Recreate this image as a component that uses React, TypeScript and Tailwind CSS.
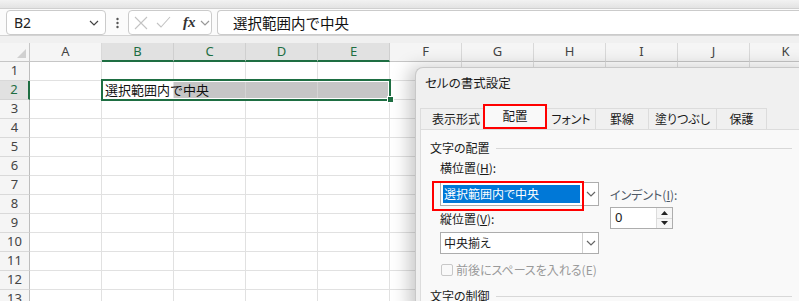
import React from "react";

const cols = ["A", "B", "C", "D", "E", "F", "G", "H", "I", "J", "K"];
const rows = Array.from({ length: 13 }, (_, i) => i + 1);
const selCols = ["B", "C", "D", "E"];

function Chevron({ className, color = "#555" }: { className?: string; color?: string }) {
  return (
    <svg className={className} width="10" height="6" viewBox="0 0 10 6">
      <polyline points="1,1 5,5 9,1" fill="none" stroke={color} strokeWidth="1.2" />
    </svg>
  );
}

function headerClass(c: string) {
  if (selCols.includes(c)) {
    return "w-[72px] shrink-0 flex items-center justify-center bg-[#e1e1e1] text-[#1e6e42] border-r border-r-[#cfcfcf] border-b-2 border-b-[#1e6e42]";
  }
  return "w-[72px] shrink-0 flex items-center justify-center bg-[#f5f5f5] text-[#444] border-r border-r-[#d9d9d9] border-b border-b-[#c6c6c6]";
}

function cellClass(r: number, c: string) {
  if (r === 2 && (c === "C" || c === "D" || c === "E")) {
    return "w-[72px] shrink-0 bg-[#c6c6c6] border-r border-b border-[#d4d4d4]";
  }
  return "w-[72px] shrink-0 border-r border-b border-[#e1e1e1]";
}

export default function App() {
  return (
    <div className="relative w-[799px] h-[301px] overflow-hidden bg-white font-['Noto_Sans_CJK_JP',sans-serif]">
      {/* top band */}
      <div className="h-[9px] bg-gradient-to-b from-[#f2f2f2] to-[#e3e3e3] border-b border-[#d0d0d0]" />
      {/* formula bar */}
      <div className="h-[26px] flex items-end bg-[#fbfbfb]">
        <div className="ml-[6px] w-[100px] h-[25px] bg-white border border-[#cbcbcb] rounded-[4px] flex items-center pl-[7px] pr-[6px]">
          <span className="font-['Noto_Sans',sans-serif] text-[14px] text-[#222]">B2</span>
          <Chevron className="ml-auto" color="#444" />
        </div>
        <div className="w-[22px] h-[25px] flex items-center justify-center">
          <svg width="3" height="12" viewBox="0 0 3 12">
            <circle cx="1.5" cy="2" r="1.2" fill="#555" />
            <circle cx="1.5" cy="6" r="1.2" fill="#555" />
            <circle cx="1.5" cy="10" r="1.2" fill="#555" />
          </svg>
        </div>
        <div className="w-[84px] h-[25px] bg-white border border-[#cbcbcb] rounded-[4px] flex items-center pl-[5px]">
          <svg width="14" height="14" viewBox="0 0 14 14" className="ml-[0px]">
            <path d="M1 1 L13 13 M13 1 L1 13" stroke="#c3c3c3" strokeWidth="1.1" fill="none" />
          </svg>
          <svg width="15" height="13" viewBox="0 0 15 13" className="ml-[8px]">
            <path d="M1 7 L5 11 L14 1" stroke="#c3c3c3" strokeWidth="1.1" fill="none" />
          </svg>
          <span className="ml-[12px] font-['Liberation_Serif',serif] italic font-bold text-[15px] text-[#333] leading-none">
            fx
          </span>
          <Chevron className="ml-[4px]" color="#999" />
        </div>
        <div className="ml-[5px] flex-1 h-[25px] bg-white border border-r-0 border-[#cbcbcb] rounded-l-[4px] flex items-center pl-[15px]">
          <span className="text-[14.5px] text-[#111]">選択範囲内で中央</span>
        </div>
      </div>
      {/* gray band */}
      <div className="h-[8px] bg-[#f0f0f0] border-t border-[#d3d3d3]" />

      {/* sheet */}
      <div className="relative font-['Noto_Sans',sans-serif] text-[13px]">
        <div className="flex h-[19px]">
          <div className="relative w-[30px] shrink-0 bg-[#f5f5f5] border-r border-b border-[#c6c6c6]">
            <svg className="absolute right-[3px] bottom-[3px]" width="9" height="9" viewBox="0 0 9 9">
              <polygon points="9,0 9,9 0,9" fill="#d0d0d0" />
            </svg>
          </div>
          {cols.map((c) => (
            <div key={c} className={headerClass(c)}>
              {c}
            </div>
          ))}
        </div>
        {rows.map((r) => (
          <div key={r} className="flex h-[19px]">
            <div
              className={
                r === 2
                  ? "w-[30px] shrink-0 flex items-center justify-center bg-[#e1e1e1] text-[#1e6e42] border-r-2 border-r-[#1e6e42] border-b border-b-[#d4d4d4]"
                  : "w-[30px] shrink-0 flex items-center justify-center bg-[#f5f5f5] text-[#444] border-r border-r-[#bdbdbd] border-b border-b-[#d9d9d9]"
              }
            >
              {r}
            </div>
            {cols.map((c) => (
              <div key={c} className={r === 2 && c === "B" ? "relative w-[72px] shrink-0 border-r border-b border-[#e1e1e1]" : cellClass(r, c)}>
                {r === 2 && c === "B" && (
                  <span className="absolute z-10 left-[3px] top-0 whitespace-nowrap leading-[18px] text-[13px] text-[#111] font-['Noto_Sans_CJK_JP',sans-serif]">
                    選択範囲内で中央
                  </span>
                )}
              </div>
            ))}
          </div>
        ))}
        {/* selection border */}
        <div className="absolute z-20 left-[101px] top-[36px] w-[290px] h-[22px] border-2 border-[#1e6e42] shadow-[inset_0_0_0_1px_#ffffff]" />
        <div className="absolute z-20 left-[387px] top-[53px] w-[7px] h-[7px] bg-[#1e6e42] border border-white" />
      </div>

      {/* dialog */}
      <div className="absolute z-30 left-[415px] top-[67px] w-[400px] h-[250px] bg-[#f0f0f0] rounded-tl-[8px] border-l border-t border-[#c8c8c8] shadow-[-6px_0_18px_rgba(0,0,0,0.22)] flex flex-col text-[12px] text-[#1a1a1a] [font-feature-settings:'palt']">
        <div className="h-[30px] pl-[9px] flex items-center text-[12.5px]">セルの書式設定</div>
        <div className="mt-[6px] h-[25px] pl-[4px] flex items-end">
          <div className="w-[63px] h-[21px] flex items-center justify-center pl-[8px] bg-[#f0f0f0] border-l border-t border-[#dcdcdc]">表示形式</div>
          <div className="w-[64px] h-[25px] flex items-center justify-center bg-[#f9f9f9] border-2 border-[#ff0000] text-[12.5px]">配置</div>
          <div className="w-[49px] h-[21px] flex items-center justify-center bg-[#f0f0f0] border-t border-r border-[#dcdcdc]">フォント</div>
          <div className="w-[53px] h-[21px] flex items-center justify-center bg-[#f0f0f0] border-t border-r border-[#dcdcdc]">罫線</div>
          <div className="w-[68px] h-[21px] flex items-center justify-center bg-[#f0f0f0] border-t border-r border-[#dcdcdc]">塗りつぶし</div>
          <div className="w-[50px] h-[21px] flex items-center justify-center bg-[#f0f0f0] border-t border-r border-[#dcdcdc]">保護</div>
        </div>
        <div className="flex-1 ml-[4px] bg-[#f9f9f9] border-l border-t border-[#dcdcdc] pl-[9px] pt-[10px]">
          <div className="w-[362px] h-[16px] flex items-center">
            <span>文字の配置</span>
            <div className="flex-1 ml-[6px] h-px bg-[#d8d8d8]" />
          </div>
          <div className="pl-[10px] flex">
            <div className="w-[159px] shrink-0">
              <div className="mt-[4px] h-[16px] leading-[16px]">
                横位置(<span className="underline">H</span>):
              </div>
              <div className="relative mt-[6px] h-[24px] bg-white border border-[#adadad] flex">
                <div className="flex-1 m-[2px] bg-[#0078d7] outline outline-1 outline-dotted outline-[#ffffff] flex items-center pl-[1px] text-white">
                  選択範囲内で中央
                </div>
                <div className="w-[16px] border-l border-[#d0d0d0] flex items-center justify-center">
                  <Chevron color="#666" />
                </div>
                <div className="absolute left-[-9px] top-[-2px] w-[152px] h-[30px] border-2 border-[#ff0000]" />
              </div>
              <div className="mt-[5px] h-[16px] leading-[16px]">
                縦位置(<span className="underline">V</span>):
              </div>
              <div className="mt-[5px] h-[22px] bg-white border border-[#adadad] flex">
                <div className="flex-1 flex items-center pl-[3px]">中央揃え</div>
                <div className="w-[16px] border-l border-[#d0d0d0] flex items-center justify-center">
                  <Chevron color="#666" />
                </div>
              </div>
            </div>
            <div className="ml-[11px] pt-[31px]">
              <div className="h-[16px] leading-[16px] text-[#4d5866]">
                インデント(<span className="underline">I</span>):
              </div>
              <div className="mt-[4px] w-[63px] h-[22px] bg-white border border-[#adadad] flex">
                <div className="flex-1 flex items-center pl-[4px] font-['Noto_Sans',sans-serif] text-[13px]">0</div>
                <div className="w-[16px] flex flex-col">
                  <div className="flex-1 border-l border-b border-[#dcdcdc] bg-[#f6f6f6] flex items-center justify-center">
                    <svg width="7" height="4" viewBox="0 0 7 4">
                      <polygon points="3.5,0 7,4 0,4" fill="#222" />
                    </svg>
                  </div>
                  <div className="flex-1 border-l border-[#dcdcdc] bg-[#f6f6f6] flex items-center justify-center">
                    <svg width="7" height="4" viewBox="0 0 7 4">
                      <polygon points="0,0 7,0 3.5,4" fill="#222" />
                    </svg>
                  </div>
                </div>
              </div>
            </div>
          </div>
          <div className="pl-[11px] mt-[8px] h-[16px] flex items-center text-[#9a9a9a]">
            <div className="w-[12px] h-[12px] rounded-[2px] border border-[#c8c8c8] bg-[#f9f9f9]" />
            <span className="ml-[3px]">前後にスペースを入れる(E)</span>
          </div>
          <div className="mt-[10px] w-[362px] h-[16px] flex items-center">
            <span>文字の制御</span>
            <div className="flex-1 ml-[6px] h-px bg-[#d8d8d8]" />
          </div>
        </div>
      </div>
    </div>
  );
}
